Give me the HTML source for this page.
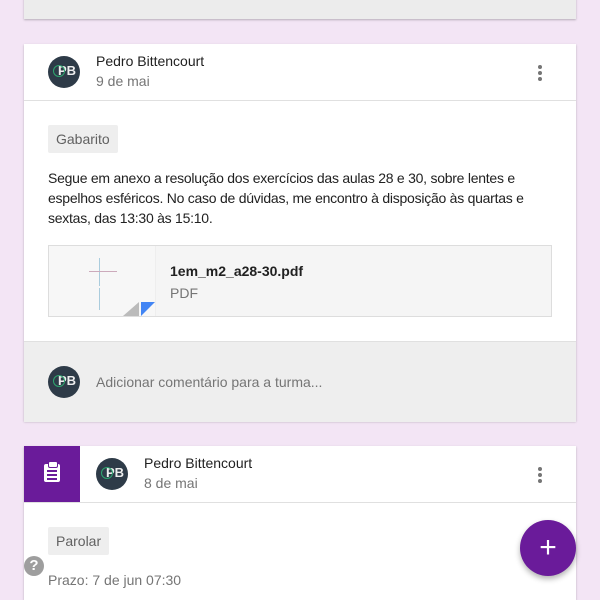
<!DOCTYPE html><html style="overflow:hidden;height:600px"><head><style>
body{margin:0;width:600px;height:600px;background:#f3e5f5;font-family:"Liberation Sans",sans-serif;position:relative;overflow:hidden}
.card{position:absolute;left:24px;width:552px;background:#fff;box-shadow:0 1px 2px rgba(0,0,0,.25)}
.av{position:absolute;width:32px;height:32px;border-radius:50%;background:#2e3b48;color:#eee;font-weight:bold;font-size:13px;line-height:30px;text-align:right;box-sizing:border-box;padding-right:4px}
.av:before{content:"";position:absolute;left:5px;top:9px;width:10px;height:10px;border:1.5px solid #2fa66f;border-radius:50%}
.name{position:absolute;font-size:14px;color:#212121}
.date{position:absolute;font-size:14px;color:#757575}
.dots{position:absolute;width:4px}
.dots i{display:block;width:4px;height:4px;border-radius:50%;background:#757575;margin-bottom:2px}
.chip{position:absolute;background:#eee;color:#616161;font-size:14px;padding:0 8px;height:28px;line-height:28px;border-radius:2px}
</style></head><body>
<div class="card" style="top:-10px;height:29px;background:#ececec"></div>
<div class="card" style="top:44px;height:377px">
 <div class="av" style="left:24px;top:12px">PB</div>
 <div class="name" style="left:72px;top:9px">Pedro Bittencourt</div>
 <div class="date" style="left:72px;top:29px">9 de mai</div>
 <div class="dots" style="left:514px;top:21px"><i></i><i></i><i></i></div>
 <div style="position:absolute;left:0;right:0;top:56px;border-top:1px solid #e0e0e0"></div>
 <div class="chip" style="left:24px;top:81px">Gabarito</div>
 <div style="position:absolute;left:24px;top:124px;width:500px;font-size:14px;line-height:20px;letter-spacing:-0.25px;color:#212121">Segue em anexo a resolução dos exercícios das aulas 28 e 30, sobre lentes e espelhos esféricos. No caso de dúvidas, me encontro à disposição às quartas e sextas, das 13:30 às 15:10.</div>
 <div style="position:absolute;left:24px;top:201px;width:502px;height:70px;border:1px solid #ddd;background:#f5f5f5">
  <div style="position:absolute;left:0;top:0;width:106px;height:70px;background:#f7f7f7;border-right:1px solid #eee">
   <div style="position:absolute;left:50px;top:12px;width:1px;height:28px;background:#acd"></div>
   <div style="position:absolute;left:40px;top:25px;width:28px;height:1px;background:#cab"></div>
   <div style="position:absolute;left:50px;top:42px;width:1px;height:22px;background:#acd"></div>
   <div style="position:absolute;left:92px;top:56px;width:0;height:0;border-left:14px solid #4285f4;border-bottom:14px solid transparent"></div>
   <div style="position:absolute;left:74px;top:56px;width:0;height:0;border-right:16px solid #bbb;border-top:14px solid transparent"></div>
  </div>
  <div style="position:absolute;left:121px;top:17px;font-size:14px;font-weight:bold;color:#212121">1em_m2_a28-30.pdf</div>
  <div style="position:absolute;left:121px;top:39px;font-size:14px;color:#757575">PDF</div>
 </div>
 <div style="position:absolute;left:0;right:0;top:297px;height:80px;background:#eee;border-top:1px solid #e0e0e0">
  <div class="av" style="left:24px;top:24px">PB</div>
  <div class="date" style="left:72px;top:32px">Adicionar comentário para a turma...</div>
 </div>
</div>
<div class="card" style="top:446px;height:154px">
 <div style="position:absolute;left:0;top:0;width:56px;height:56px;background:#6a1b9a">
  <div style="position:absolute;left:20px;top:18px;width:16px;height:18px;background:#fff;border-radius:2px"></div>
  <div style="position:absolute;left:24px;top:15px;width:8px;height:5px;background:#fff;border:1px solid #6a1b9a;border-radius:2px"></div>
  <div style="position:absolute;left:23px;top:24px;width:10px;height:2px;background:#6a1b9a;box-shadow:0 4px 0 #6a1b9a,0 8px 0 #6a1b9a"></div>
 </div>
 <div class="av" style="left:72px;top:12px">PB</div>
 <div class="name" style="left:120px;top:9px">Pedro Bittencourt</div>
 <div class="date" style="left:120px;top:29px">8 de mai</div>
 <div class="dots" style="left:514px;top:21px"><i></i><i></i><i></i></div>
 <div style="position:absolute;left:0;right:0;top:56px;border-top:1px solid #e0e0e0"></div>
 <div class="chip" style="left:24px;top:81px">Parolar</div>
 <div class="date" style="left:24px;top:126px">Prazo: 7 de jun 07:30</div>
</div>
<div style="position:absolute;left:24px;top:556px;width:20px;height:20px;border-radius:50%;background:#9e9e9e;color:#fff;font-weight:bold;font-size:15px;line-height:20px;text-align:center">?</div>
<div style="position:absolute;left:520px;top:520px;width:56px;height:56px;border-radius:50%;background:#6a1b9a;color:#fff;font-size:30px;line-height:56px;text-align:center;box-shadow:0 3px 6px rgba(0,0,0,.3)">+</div>
</body></html>
